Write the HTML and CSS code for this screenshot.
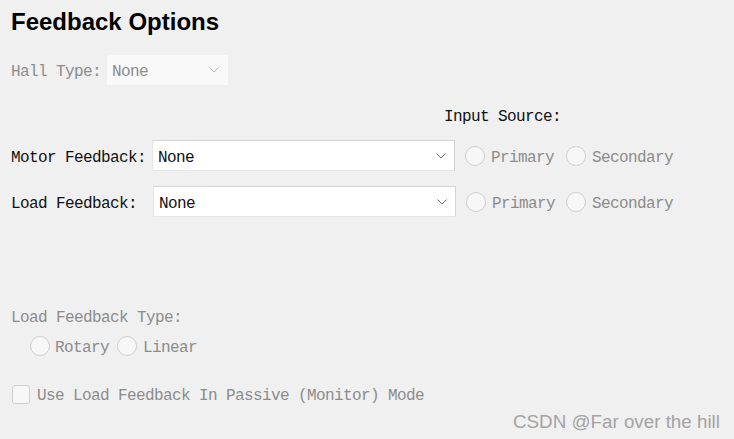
FILE: index.html
```html
<!DOCTYPE html>
<html>
<head>
<meta charset="utf-8">
<link rel="stylesheet" href="styles.css">
</head>
<body>
<div class="page">
  <h1 class="title">Feedback Options</h1>

  <div class="row hall-row">
    <span class="label disabled hall-label">Hall Type:</span>
    <div class="select select-disabled hall-select">
      <span class="select-text">None</span>
      <svg class="chev" width="10" height="6" viewBox="0 0 10 6"><polyline points="0.5,0.5 5,5 9.5,0.5" fill="none" stroke="#b5b5b5" stroke-width="1"/></svg>
    </div>
  </div>

  <div class="row source-row">
    <span class="label">Input Source:</span>
  </div>

  <div class="row fb-row motor-row">
    <span class="label motor-label">Motor Feedback:</span>
    <div class="select fb-select">
      <span class="select-text">None</span>
      <svg class="chev" width="10" height="6" viewBox="0 0 10 6"><polyline points="0.5,0.5 5,5 9.5,0.5" fill="none" stroke="#6e6e6e" stroke-width="1"/></svg>
    </div>
    <span class="radio first"></span><span class="label disabled rlabel">Primary</span>
    <span class="radio second"></span><span class="label disabled rlabel">Secondary</span>
  </div>

  <div class="row fb-row load-row">
    <span class="label load-label">Load Feedback:</span>
    <div class="select fb-select">
      <span class="select-text">None</span>
      <svg class="chev" width="10" height="6" viewBox="0 0 10 6"><polyline points="0.5,0.5 5,5 9.5,0.5" fill="none" stroke="#6e6e6e" stroke-width="1"/></svg>
    </div>
    <span class="radio first"></span><span class="label disabled rlabel">Primary</span>
    <span class="radio second load-second"></span><span class="label disabled rlabel">Secondary</span>
  </div>

  <div class="row type-row">
    <span class="label disabled">Load Feedback Type:</span>
  </div>

  <div class="row type-radios">
    <span class="radio"></span><span class="label disabled rotary">Rotary</span>
    <span class="radio"></span><span class="label disabled linear">Linear</span>
  </div>

  <div class="row check-row">
    <span class="checkbox"></span>
    <span class="label disabled">Use Load Feedback In Passive (Monitor) Mode</span>
  </div>
</div>
<div class="watermark">CSDN @Far over the hill</div>
</body>
</html>
```

FILE: styles.css
```css
html, body {
  margin: 0;
  padding: 0;
  background: #f0f0f0;
  width: 734px;
  height: 439px;
  overflow: hidden;
}

.page {
  padding-left: 11px;
}

.title {
  margin: 8px 0 0;
  font-family: "Liberation Sans", Arial, sans-serif;
  font-weight: bold;
  font-size: 24px;
  line-height: 28px;
  color: #000;
}

.row {
  display: flex;
  align-items: center;
}

.label {
  font-family: "Liberation Mono", "DejaVu Sans Mono", monospace;
  font-size: 16px;
  letter-spacing: -0.6px;
  line-height: 20px;
  padding-top: 4px;
  color: #111;
  white-space: pre;
}

.label.disabled {
  color: #8c8c8c;
}

.hall-row {
  margin-top: 19px;
  height: 30px;
}

.hall-label {
  width: 96px;
}

.select {
  display: flex;
  align-items: center;
  justify-content: space-between;
  box-sizing: border-box;
  padding: 0 9px 0 5px;
}

.select-text {
  font-family: "Liberation Mono", "DejaVu Sans Mono", monospace;
  font-size: 16px;
  letter-spacing: -0.6px;
  line-height: 20px;
  padding-top: 4px;
  color: #111;
}

.select-disabled {
  width: 121px;
  height: 30px;
  background: #f9f9f9;
}

.select-disabled .select-text {
  color: #8c8c8c;
}

.source-row {
  margin-top: 20px;
  height: 20px;
  padding-left: 433px;
}

.fb-row {
  height: 31px;
}

.motor-row {
  margin-top: 15px;
}

.load-row {
  margin-top: 15px;
}

.motor-label {
  width: 141px;
}

.load-label {
  width: 142px;
}

.fb-select {
  width: 303px;
  height: 31px;
  background: #fff;
  border: 1px solid #d4d4d4;
  border-bottom-color: #e6e6e6;
  border-left-color: #e6e6e6;
  padding-right: 8px;
}

.radio {
  box-sizing: border-box;
  width: 20px;
  height: 20px;
  border-radius: 50%;
  border: 1px solid #cfcfcf;
  background: #f7f7f7;
  flex: none;
}

.fb-row .radio.first {
  margin-left: 10px;
}

.fb-row .radio.second {
  margin-left: 12px;
}

.fb-row .radio.load-second {
  margin-left: 11px;
}

.rlabel {
  margin-left: 6px;
}

.type-row {
  margin-top: 89px;
  height: 20px;
}

.type-radios {
  margin-top: 10px;
  height: 20px;
  padding-left: 19px;
}

.rotary {
  margin-left: 5px;
  margin-right: 8px;
}

.linear {
  margin-left: 6px;
}

.check-row {
  margin-top: 28px;
  height: 20px;
}

.checkbox {
  box-sizing: border-box;
  width: 18px;
  height: 19px;
  border: 1px solid #cfcfcf;
  border-radius: 3px;
  background: #f7f7f7;
  margin-left: 1px;
  margin-right: 7px;
  flex: none;
}

.watermark {
  position: absolute;
  left: 513px;
  top: 411px;
  font-family: "Liberation Sans", Arial, sans-serif;
  font-size: 18.8px;
  line-height: 22px;
  color: #a3a3a3;
  white-space: nowrap;
}
```
